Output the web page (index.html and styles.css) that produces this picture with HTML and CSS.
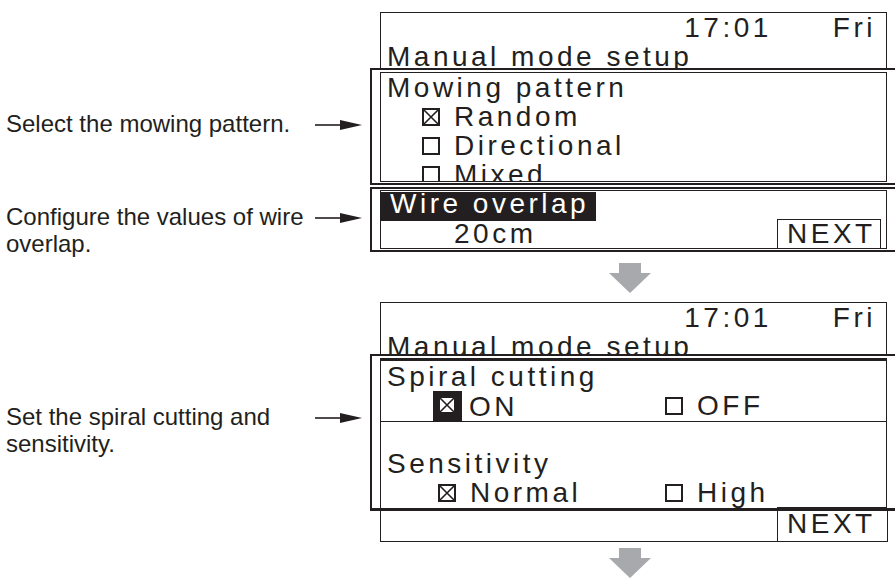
FILE: index.html
```html
<!DOCTYPE html>
<html lang="en">
<head>
    <meta charset="UTF-8">
    <meta name="viewport" content="width=device-width, initial-scale=1.0">
    <title>Manual mode setup</title>
    <link rel="stylesheet" href="styles.css">
</head>
<body>
    <div class="page">

        <!-- screen 1 -->
        <div class="step step-top">
            <div class="note"></div>
            <div class="panel">
                <div class="lcd-head head-1">
                    <div class="line time"><span>17:01</span><span>Fri</span></div>
                    <div class="line">Manual mode setup</div>
                </div>
            </div>
        </div>

        <div class="step">
            <div class="note note-1">
                <p>Select the mowing pattern.</p>
                <svg class="pointer" width="47" height="12" viewBox="0 0 47 12"><path d="M0 6H28" stroke="#231f20" stroke-width="1.6"/><path d="M25 1L47 6L25 11Z" fill="#231f20"/></svg>
            </div>
            <div class="panel">
                <div class="focus focus-1">
                    <div class="box">
                        <div class="line">Mowing pattern</div>
                        <div class="line opt1"><svg class="chk" viewBox="0 0 18 18"><rect x="1" y="1" width="16" height="16" fill="none" stroke="#231f20" stroke-width="2"/><path d="M2 2L16 16M16 2L2 16" stroke="#231f20" stroke-width="1.6"/></svg>Random</div>
                        <div class="line opt1"><svg class="chk" viewBox="0 0 18 18"><rect x="1" y="1" width="16" height="16" fill="none" stroke="#231f20" stroke-width="2"/></svg>Directional</div>
                        <div class="line opt1"><svg class="chk" viewBox="0 0 18 18"><rect x="1" y="1" width="16" height="16" fill="none" stroke="#231f20" stroke-width="2"/></svg>Mixed</div>
                    </div>
                </div>
            </div>
        </div>

        <div class="step step-gap">
            <div class="note note-2">
                <p>Configure the values of wire overlap.</p>
                <svg class="pointer" width="47" height="12" viewBox="0 0 47 12"><path d="M0 6H28" stroke="#231f20" stroke-width="1.6"/><path d="M25 1L47 6L25 11Z" fill="#231f20"/></svg>
            </div>
            <div class="panel">
                <div class="focus focus-2">
                    <div class="box">
                        <div class="inv-row"><span class="inv">Wire overlap</span></div>
                        <div class="val-row">
                            <span class="val">20cm</span>
                            <span class="next">NEXT</span>
                        </div>
                    </div>
                </div>
            </div>
        </div>

        <div class="step step-arrow">
            <div class="note"></div>
            <div class="panel down">
                <svg width="42" height="30" viewBox="0 0 42 30"><path d="M10 0H32V10H42L21 30L0 10H10Z" fill="#a7a9ac"/></svg>
            </div>
        </div>

        <!-- screen 2 -->
        <div class="step step-screen2">
            <div class="note"></div>
            <div class="panel">
                <div class="lcd-head head-2">
                    <div class="line time"><span>17:01</span><span>Fri</span></div>
                    <div class="line">Manual mode setup</div>
                </div>
            </div>
        </div>

        <div class="step">
            <div class="note note-3">
                <p>Set the spiral cutting and sensitivity.</p>
                <svg class="pointer" width="47" height="12" viewBox="0 0 47 12"><path d="M0 6H28" stroke="#231f20" stroke-width="1.6"/><path d="M25 1L47 6L25 11Z" fill="#231f20"/></svg>
            </div>
            <div class="panel">
                <div class="focus focus-3">
                    <div class="box">
                        <div class="line">Spiral cutting</div>
                        <div class="line opt2 sep">
                            <div><svg class="chk-on" viewBox="0 0 29 30"><rect width="29" height="30" fill="#231f20"/><rect x="7" y="7" width="14" height="14" fill="#fff"/><path d="M7 7L21 21M21 7L7 21" stroke="#231f20" stroke-width="1.6"/></svg>ON</div>
                            <div><svg class="chk" viewBox="0 0 18 18"><rect x="1" y="1" width="16" height="16" fill="none" stroke="#231f20" stroke-width="2"/></svg>OFF</div>
                        </div>
                        <div class="blank"></div>
                        <div class="line">Sensitivity</div>
                        <div class="line opt2">
                            <div><svg class="chk" viewBox="0 0 18 18"><rect x="1" y="1" width="16" height="16" fill="none" stroke="#231f20" stroke-width="2"/><path d="M2 2L16 16M16 2L2 16" stroke="#231f20" stroke-width="1.6"/></svg>Normal</div>
                            <div><svg class="chk" viewBox="0 0 18 18"><rect x="1" y="1" width="16" height="16" fill="none" stroke="#231f20" stroke-width="2"/></svg>High</div>
                        </div>
                        <div class="next-edge"></div>
                    </div>
                </div>
            </div>
        </div>

        <div class="step">
            <div class="note"></div>
            <div class="panel">
                <div class="lcd-foot">
                    <span class="next-low">NEXT</span>
                </div>
            </div>
        </div>

        <div class="step step-arrow">
            <div class="note"></div>
            <div class="panel down">
                <svg width="42" height="30" viewBox="0 0 42 30"><path d="M10 0H32V10H42L21 30L0 10H10Z" fill="#a7a9ac"/></svg>
            </div>
        </div>

    </div>
</body>
</html>
```

FILE: styles.css
```css
html, body {
    margin: 0;
    overflow: hidden;
    background: #fff;
}

body {
    width: 895px;
    height: 582px;
    font-family: "Liberation Sans", Arial, sans-serif;
    color: #231f20;
}

.step {
    display: flex;
}

.step-top {
    margin-top: 12px;
}

.step-gap {
    margin-top: 2px;
}

.step-arrow {
    margin-top: 6px;
}

.step-screen2 {
    margin-top: 9px;
}

/* left column labels */
.note {
    width: 370px;
    flex-shrink: 0;
    display: flex;
    align-items: flex-start;
    box-sizing: border-box;
    padding-left: 6px;
    font-size: 24px;
    line-height: 27px;
}

.note p {
    margin: 0;
    width: 309px;
}

.note .pointer {
    flex-shrink: 0;
    margin-top: 9px;
}

.note-1 { padding-top: 42px; }
.note-2 { padding-top: 16px; }
.note-3 { padding-top: 49px; }

/* right column, the lcd screens */
.panel {
    width: 525px;
    flex-shrink: 0;
    font-size: 28px;
    letter-spacing: 3.5px;
}

.line {
    height: 29px;
    line-height: 29px;
    white-space: nowrap;
    padding-left: 6px;
}

.lcd-head {
    margin-left: 10px;
    width: 507px;
    box-sizing: border-box;
    border: 1px solid #231f20;
    border-bottom: none;
    overflow: hidden;
}

.head-1 { height: 56px; }
.head-2 { height: 52px; }

.time {
    display: flex;
    justify-content: flex-end;
    gap: 61px;
    padding-right: 10px;
}

.focus {
    width: 540px;
    box-sizing: border-box;
    border: 2px solid #231f20;
    padding: 2px 0 1px 8px;
}

.focus .box {
    width: 507px;
    box-sizing: border-box;
    border: 1px solid #231f20;
    overflow: hidden;
}

.focus-1 .box {
    height: 110px;
}

.focus-2 {
    padding-top: 1px;
}

.focus-2 .box {
    height: 59px;
}

.focus-3 {
    padding-bottom: 0;
    border-bottom-width: 3px;
}

.focus-3 .box {
    border-top-width: 3px;
    border-bottom: none;
    padding-top: 1px;
}

.chk {
    width: 18px;
    height: 18px;
    margin-right: 14px;
    vertical-align: baseline;
}

.chk-on {
    width: 29px;
    height: 30px;
    margin: 0 7px 0 -5px;
    vertical-align: -5px;
}

.opt1 {
    padding-left: 41px;
}

.opt2 {
    display: grid;
    grid-template-columns: 227px auto;
    padding-left: 57px;
}

.sep {
    height: 30px;
    border-bottom: 1px solid #231f20;
}

.blank {
    height: 27px;
}

.next-edge {
    height: 1px;
    margin-left: 396px;
    background: #231f20;
}

/* wire overlap block */
.inv-row {
    display: flex;
    align-items: flex-start;
    height: 28px;
}

.inv {
    margin-top: 1px;
    background: #231f20;
    color: #fff;
    line-height: 23px;
    padding: 0 7px 6px 9px;
    white-space: nowrap;
}

.val-row {
    display: flex;
    height: 29px;
}

.val {
    margin-left: 73px;
    line-height: 29px;
}

.next {
    margin-left: auto;
    margin-right: 5px;
    width: 104px;
    height: 29px;
    box-sizing: border-box;
    border: 1px solid #231f20;
    border-bottom: none;
    padding-left: 9px;
    line-height: 27px;
}

.lcd-foot {
    margin-left: 10px;
    width: 506px;
    height: 30px;
    border: 1px solid #231f20;
    border-top: none;
    overflow: hidden;
    display: flex;
}

.next-low {
    margin-left: 396px;
    flex: 1;
    border-left: 1px solid #231f20;
    padding-left: 9px;
    line-height: 25px;
}

.down {
    height: 30px;
    padding-left: 239px;
    box-sizing: border-box;
}

.down svg {
    display: block;
}
```
